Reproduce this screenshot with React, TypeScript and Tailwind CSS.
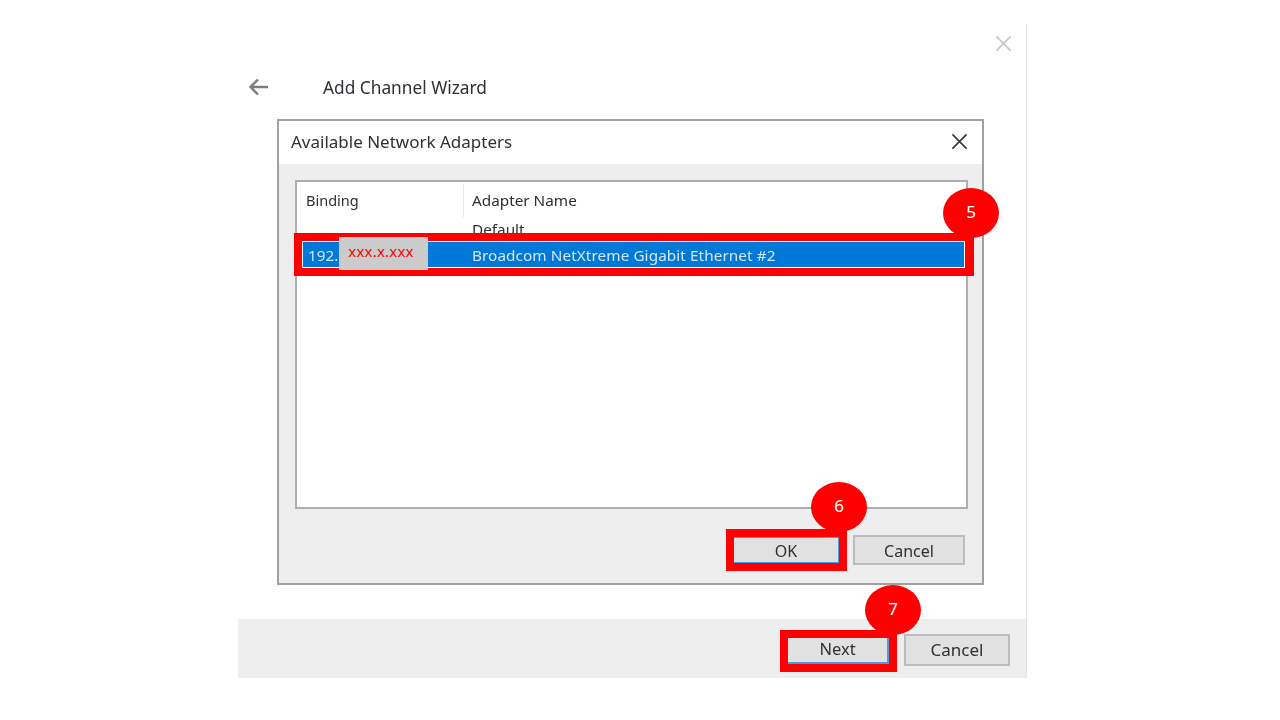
// Add Channel Wizard - network adapter selection step with numbered callouts

const font = "font-['Noto_Sans','Open_Sans',sans-serif]";

function CloseIcon({ className }: { className: string }) {
  return (
    <svg viewBox="0 0 18 18" className={className} fill="none" stroke="currentColor" strokeWidth="1.7">
      <path d="M1.5 1.5 L16.5 16.5 M16.5 1.5 L1.5 16.5" />
    </svg>
  );
}

function DialogButton({ label, className }: { label: string; className: string }) {
  return (
    <button
      className={`flex items-center justify-center border-2 bg-[#e1e1e1] text-[#2f2f35] ${className}`}
    >
      <span className="inline-block blur-[0.5px]">{label}</span>
    </button>
  );
}

function Callout({ n, className }: { n: number; className: string }) {
  return (
    <div
      className={`absolute flex h-[50px] w-[56px] items-center justify-center rounded-[50%] bg-[#ff0000] pb-[3px] text-[17px] text-white ${className}`}
    >
      {n}
    </div>
  );
}

function AdapterList() {
  return (
    <div className="flex h-[329px] w-[673px] flex-col border-2 border-[#aeaeb2] bg-white text-[15.3px]">
      <div className="ml-[9px] mt-[2px] flex h-[33px] items-center text-[#2f2f35]">
        <span className="inline-block w-[157px] text-[14.5px] blur-[0.5px]">Binding</span>
        <span className="h-full w-[1px] bg-[#e6e6e6]" />
        <span className="ml-[8px] inline-block blur-[0.5px]">Adapter Name</span>
      </div>
      <div className="ml-[175px] h-[25px] pt-[1px] text-[#2f2f35]">
        <span className="inline-block blur-[0.5px]">Default</span>
      </div>
      <div className="ml-[6px] mr-[2px] flex h-[25px] items-center bg-[#0078d7] pt-[2px] text-[#d3e5f6]">
        <span className="ml-[5px] inline-block w-[164px] blur-[0.5px]">192.</span>
        <span className="inline-block tracking-[0.08px] blur-[0.5px]">Broadcom NetXtreme Gigabit Ethernet #2</span>
      </div>
    </div>
  );
}

export default function App() {
  return (
    <div className={`relative h-[720px] w-[1280px] overflow-hidden bg-white ${font}`}>
      <div className="absolute left-[238px] top-[24px] flex h-[654px] w-[789px] flex-col border-r border-[#e4e4e4]">
        <div className="flex h-[39px] justify-end pr-[14px] pt-[11px]">
          <CloseIcon className="h-[17px] w-[17px] text-[#c6c6c6]" />
        </div>
        <div className="flex h-[56px] items-start pl-[10px]">
          <svg viewBox="0 0 20 18" className="mt-[15px] h-[18px] w-[20px] text-[#7c7c80]" fill="none" stroke="currentColor" strokeWidth="2.4">
            <path d="M20 9 H2 M10 1.5 L2.5 9 L10 16.5" />
          </svg>
          <span className="ml-[55px] mt-[12px] inline-block text-[17.3px] text-[#2f2f35] blur-[0.5px]">Add Channel Wizard</span>
        </div>

        <div className="ml-[39px] flex h-[466px] w-[707px] flex-col border-2 border-[#a0a0a0]">
          <div className="flex h-[43px] shrink-0 items-center justify-between bg-white pb-[2px] pl-[12px] pr-[14px]">
            <span className="inline-block text-[17px] text-[#2f2f35] blur-[0.5px]">Available Network Adapters</span>
            <CloseIcon className="h-[17px] w-[17px] text-[#38383c]" />
          </div>
          <div className="flex flex-1 flex-col bg-[#eeeeee] pl-[16px] pt-[16px]">
            <AdapterList />
            <div className="mt-[26px] flex items-start justify-end gap-[14px] pr-[17px]">
              <DialogButton label="OK" className="mt-[2px] h-[26px] w-[106px] border-[1.5px] border-[#4a9be0] pt-[1px] text-[16px]" />
              <DialogButton label="Cancel" className="h-[30px] w-[112px] border-[#bcbcbc] pt-[2px] text-[16px]" />
            </div>
          </div>
        </div>

        <div className="mt-auto flex h-[59px] items-start justify-end gap-[15px] border-t border-[#ececec] bg-[#eeeeee] pr-[16px] pt-[14px]">
          <DialogButton label="Next" className="h-[30px] w-[103px] border-[#e1e1e1] border-r-[#4a9be0] border-b-[#4a9be0] text-[16.5px]" />
          <DialogButton label="Cancel" className="h-[32px] w-[106px] border-[#bcbcbc] pb-[1px] text-[17px]" />
        </div>
      </div>

      {/* Annotations drawn over the screenshot */}
      <div className="absolute left-[294px] top-[233px] h-[43px] w-[680px] border-[8px] border-r-[9px] border-[#ff0000]" />
      <div className="absolute left-[339px] top-[237px] flex h-[33px] w-[89px] items-center justify-center bg-[#cccbcb] pb-[5px] pr-[5px] text-[15px] tracking-[0.2px] text-[#ff0000]">
        xxx.x.xxx
      </div>
      <div className="absolute left-[726px] top-[529px] h-[42px] w-[121px] border-[8px] border-[#ff0000]" />
      <div className="absolute left-[780px] top-[630px] h-[42px] w-[117px] border-[8px] border-[#ff0000]" />
      <Callout n={5} className="left-[943px] top-[188px]" />
      <Callout n={6} className="left-[811px] top-[482px]" />
      <Callout n={7} className="left-[865px] top-[585px]" />
    </div>
  );
}
